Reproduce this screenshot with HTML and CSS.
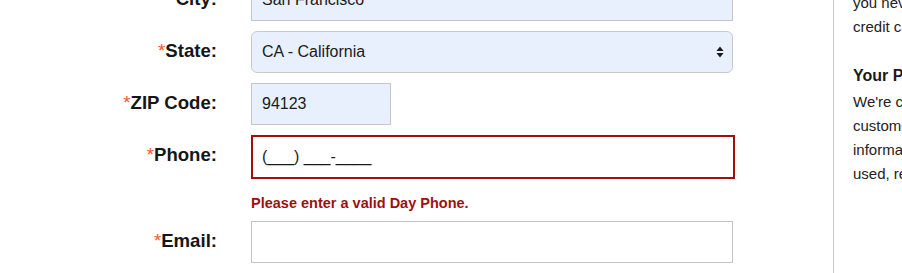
FILE: index.html
```html
<!DOCTYPE html>
<html lang="en">
<head>
<meta charset="utf-8">
<title>Shipping Address</title>
<link rel="stylesheet" href="styles.css">
</head>
<body>
<div class="page">
  <form class="form">
    <label class="label" for="city"><span class="req">*</span>City:</label>
    <input class="field autofill" id="city" type="text" value="San Francisco">

    <label class="label" for="state"><span class="req">*</span>State:</label>
    <div class="select autofill" id="state">
      <span class="select-value">CA - California</span>
      <svg class="select-arrows" width="8" height="12" viewBox="0 0 8 12" aria-hidden="true">
        <path d="M4 0.5 L7.5 5 L0.5 5 Z" fill="#1a1a1a"/>
        <path d="M0.5 7 L7.5 7 L4 11.5 Z" fill="#1a1a1a"/>
      </svg>
    </div>

    <label class="label" for="zip"><span class="req">*</span>ZIP Code:</label>
    <input class="field field-zip autofill" id="zip" type="text" value="94123">

    <label class="label" for="phone"><span class="req">*</span>Phone:</label>
    <input class="field field-error" id="phone" type="text" value="(___) ___-____">

    <div class="error">Please enter a valid Day Phone.</div>

    <label class="label" for="email"><span class="req">*</span>Email:</label>
    <input class="field" id="email" type="text" value="">
  </form>

  <aside class="sidebar">
    <p class="side-text">you never have to worry about your<br>credit card information being shared.</p>
    <h3 class="side-head">Your Privacy</h3>
    <p class="side-text">We're committed to protecting our<br>customers' privacy. Read how your<br>information is collected, stored,<br>used, retained and protected.</p>
  </aside>
</div>
</body>
</html>
```

FILE: styles.css
```css
html, body {
  margin: 0;
  padding: 0;
  overflow: hidden;
  background: #ffffff;
}

body {
  font-family: "Liberation Sans", Arial, Helvetica, sans-serif;
  color: #1a1a1a;
}

.page {
  display: flex;
  align-items: stretch;
  margin-top: -21px;
  width: 1100px;
  height: 300px;
}

.form {
  display: grid;
  grid-template-columns: 217px 482px;
  column-gap: 34px;
  row-gap: 10px;
  align-items: start;
  align-content: start;
  align-self: flex-start;
  margin: 0;
}

.label {
  font-size: 18.6px;
  font-weight: bold;
  line-height: 22px;
  padding-top: 9px;
  text-align: right;
  color: #161616;
}

.req {
  color: #f5572e;
  font-weight: normal;
}

.field {
  box-sizing: border-box;
  display: block;
  width: 482px;
  height: 42px;
  margin: 0;
  padding: 0 10px;
  border: 1px solid #c6c6c6;
  border-radius: 0;
  background: #ffffff;
  font-family: "Liberation Sans", Arial, Helvetica, sans-serif;
  font-size: 16px;
  color: #1a1a1a;
  outline: none;
}

.autofill {
  background: #e8f0fe;
}

.field-zip {
  width: 140px;
}

.field-error {
  width: 484px;
  height: 44px;
  border: 2px solid #a30e0e;
  padding: 0 9px;
}

.select {
  box-sizing: border-box;
  display: flex;
  align-items: center;
  justify-content: space-between;
  width: 482px;
  height: 42px;
  padding: 0 8px 0 10px;
  border: 1px solid #c9c9c9;
  border-radius: 6px;
  font-size: 16px;
  color: #1a1a1a;
}

.select-value {
  line-height: 20px;
}

.select-arrows {
  display: block;
}

.error {
  grid-column: 2;
  margin-top: 6px;
  font-size: 14.5px;
  font-weight: bold;
  line-height: 16px;
  color: #9b1111;
}

.sidebar {
  margin-left: 100px;
  border-left: 1px solid #c8c8c8;
  padding: 12px 0 0 19px;
  width: 320px;
}

.side-text {
  margin: 0;
  font-size: 15px;
  line-height: 24px;
  color: #222222;
  white-space: nowrap;
}

.side-head {
  margin: 25px 0 2px;
  font-size: 16px;
  font-weight: bold;
  line-height: 24px;
  color: #1a1a1a;
}
```
